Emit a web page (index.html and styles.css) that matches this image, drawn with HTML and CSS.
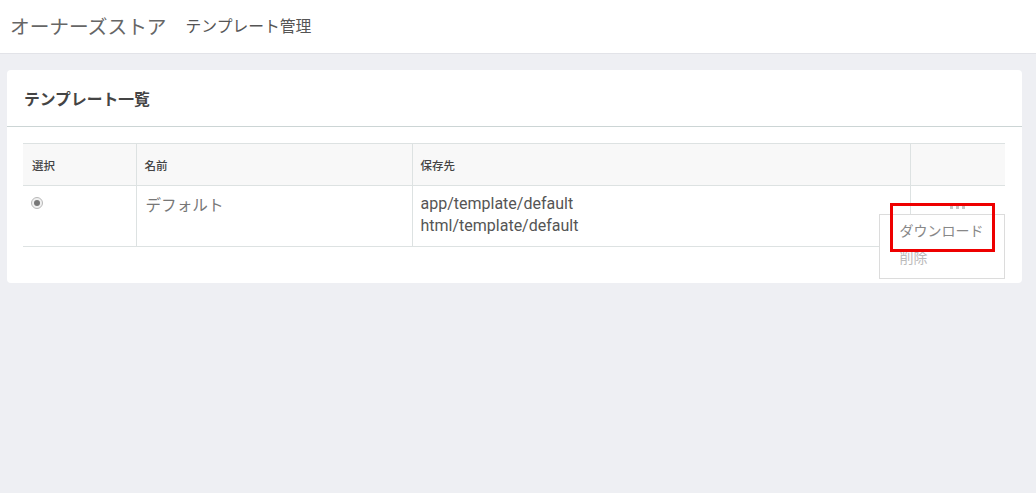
FILE: index.html
```html
<!DOCTYPE html>
<html lang="ja">
<head>
<meta charset="utf-8">
<title>テンプレート管理</title>
<link rel="stylesheet" href="styles.css">
</head>
<body>
<header class="topbar">
  <h1 class="site-title">オーナーズストア</h1>
  <span class="page-title">テンプレート管理</span>
</header>
<main class="main">
  <section class="card">
    <div class="card-header">テンプレート一覧</div>
    <div class="card-body">
      <table class="tpl-table">
        <thead>
          <tr>
            <th class="col-select">選択</th>
            <th class="col-name">名前</th>
            <th class="col-path">保存先</th>
            <th class="col-action"></th>
          </tr>
        </thead>
        <tbody>
          <tr>
            <td class="col-select"><span class="radio"></span></td>
            <td class="col-name name-cell">デフォルト</td>
            <td class="col-path path-cell">app/template/default<br>html/template/default</td>
            <td class="col-action action-cell">
              <span class="dots"><i></i><i></i><i></i></span>
              <div class="dropdown">
                <div class="dd-item">ダウンロード</div>
                <div class="dd-item dd-disabled">削除</div>
              </div>
              <div class="highlight"></div>
            </td>
          </tr>
        </tbody>
      </table>
    </div>
  </section>
</main>
</body>
</html>
```

FILE: styles.css
```css
* { box-sizing: border-box; }
html, body {
  margin: 0;
  padding: 0;
  background: #eeeff3;
  font-family: Roboto, "Noto Sans CJK JP", sans-serif;
  color: #555;
}
.topbar {
  height: 54px;
  background: #fff;
  border-bottom: 1px solid #e2e3e8;
  display: flex;
  align-items: center;
  padding: 0 0 2px 10px;
}
.site-title {
  margin: 0;
  font-size: 19.7px;
  font-weight: 400;
  color: #666;
}
.page-title {
  margin-left: 19px;
  font-size: 15.8px;
  color: #555;
}
.main {
  padding: 16px 14px 0 7px;
}
.card {
  background: #fff;
  border-radius: 4px;
}
.card-header {
  height: 57px;
  padding: 0 17px;
  display: flex;
  align-items: center;
  font-size: 15.8px;
  font-weight: 700;
  color: #444;
  border-bottom: 1px solid #ccd5d5;
}
.card-body {
  padding: 16px 17px 36px 16px;
}
.tpl-table {
  width: 100%;
  border-collapse: collapse;
  font-size: 12px;
}
.tpl-table th {
  background: #f8f8f8;
  height: 42px;
  text-align: left;
  font-weight: 500;
  color: #444;
  padding: 0 8px;
  border-top: 1px solid #dde2e2;
  border-bottom: 1px solid #dde2e2;
  font-size: 11.5px;
}
.tpl-table td {
  vertical-align: top;
  padding: 8px 8px 0;
  height: 61px;
  border-bottom: 1px solid #dde2e2;
}
.col-select { width: 113px; border-right: 1px solid #dde2e2; }
.col-name { width: 276px; border-right: 1px solid #dde2e2; }
.col-path { width: 498px; border-right: 1px solid #dde2e2; }
.col-action { position: relative; }
.tpl-table th.col-select { padding-left: 9px; }
.radio {
  display: inline-block;
  margin: 3px 0 0 0;
  width: 12px;
  height: 12px;
  border-radius: 50%;
  border: 1px solid #b8b8b8;
  background: #f0f0f0;
  position: relative;
}
.radio::after {
  content: "";
  position: absolute;
  left: 2px;
  top: 2px;
  width: 6px;
  height: 6px;
  border-radius: 50%;
  background: #777;
}
.name-cell {
  font-size: 15.6px;
  color: #777;
  padding-left: 9px !important;
  padding-top: 7px !important;
}
.path-cell {
  font-size: 16px;
  line-height: 22px;
  color: #555;
  padding-top: 7px !important;
}
.dots {
  position: absolute;
  left: 39px;
  top: 20px;
  display: flex;
  gap: 3px;
}
.dots i {
  display: block;
  width: 3px;
  height: 3px;
  background: #c4c4c4;
}
.dropdown {
  position: absolute;
  left: -32px;
  top: 28px;
  width: 126px;
  background: #fff;
  border: 1px solid #dcdcdc;
  padding: 3px 0 6px;
  z-index: 2;
}
.dd-item {
  padding: 0 20px;
  height: 27px;
  line-height: 27px;
  font-size: 14px;
  color: #888;
  white-space: nowrap;
}
.dd-disabled { color: #bbb; }
.highlight {
  position: absolute;
  left: -21px;
  top: 17px;
  width: 105px;
  height: 49px;
  border: 3px solid #ee0000;
  z-index: 3;
}
```
